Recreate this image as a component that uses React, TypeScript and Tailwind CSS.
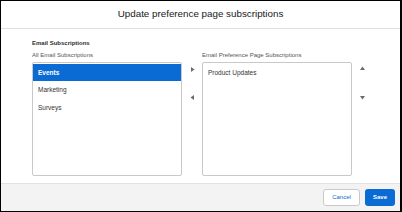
import React from "react";

const font = { fontFamily: '"Liberation Sans", Arial, sans-serif' };

function Tri({ dir }: { dir: "right" | "left" | "up" | "down" }) {
  const pts: Record<string, string> = {
    right: "1,0 4.5,2.5 1,5",
    left: "4,0 0.5,2.5 4,5",
    up: "0,4 2.5,0.5 5,4",
    down: "0,1 2.5,4.5 5,1",
  };
  return (
    <svg width="5" height="5" viewBox="0 0 5 5">
      <polygon points={pts[dir]} fill="#6b6b6b" />
    </svg>
  );
}

export default function App() {
  return (
    <div
      className="w-[402px] h-[212px] bg-black p-[1px] pr-[2px]"
      style={font}
    >
      <div className="w-full h-full bg-white flex flex-col">
        <div className="h-[28px] flex items-center justify-center border-b border-[#e0e0e0] text-[9.8px] text-[#181818]">
          Update preference page subscriptions
        </div>
        <div className="flex-1 pl-[31px] pt-[10px]">
          <div className="text-[6px] leading-[8px] font-bold text-[#2e2e2e]">
            Email Subscriptions
          </div>
          <div className="flex mt-[4px]">
            <div className="flex flex-col w-[150px]">
              <div className="text-[6px] leading-[8px] text-[#555]">
                All Email Subscriptions
              </div>
              <div className="mt-[3px] h-[114px] border border-[#c9c9c9] rounded-[2px] pt-[1px]">
                <div className="h-[17px] bg-[#0b6bd4] text-white font-bold text-[6.5px] flex items-center pl-[5px]">
                  Events
                </div>
                <div className="h-[18px] text-[6.5px] text-[#333] flex items-center pl-[5px]">
                  Marketing
                </div>
                <div className="h-[17px] text-[6.5px] text-[#333] flex items-center pl-[5px]">
                  Surveys
                </div>
              </div>
            </div>
            <div className="w-[20px] flex flex-col items-center pt-[16px]">
              <Tri dir="right" />
              <div className="h-[23px]" />
              <Tri dir="left" />
            </div>
            <div className="flex flex-col w-[150px]">
              <div className="text-[6px] leading-[8px] text-[#555]">
                Email Preference Page Subscriptions
              </div>
              <div className="mt-[3px] h-[114px] border border-[#c9c9c9] rounded-[2px] pt-[1px]">
                <div className="h-[17px] text-[6.5px] text-[#333] flex items-center pl-[5px]">
                  Product Updates
                </div>
              </div>
            </div>
            <div className="w-[20px] flex flex-col items-center pt-[15px]">
              <Tri dir="up" />
              <div className="h-[24px]" />
              <Tri dir="down" />
            </div>
          </div>
        </div>
        <div className="h-[28px] bg-[#f3f3f3] border-t border-[#e2e2e2] flex items-center justify-end gap-[5px] pr-[5px]">
          <div className="h-[17px] w-[37px] border border-[#c9c9c9] bg-white rounded-[3px] flex items-center justify-center text-[6px] text-[#0b6bd4]">
            Cancel
          </div>
          <div className="h-[17px] w-[30px] bg-[#0b6bd4] rounded-[3px] flex items-center justify-center text-[6px] font-bold text-white">
            Save
          </div>
        </div>
      </div>
    </div>
  );
}
